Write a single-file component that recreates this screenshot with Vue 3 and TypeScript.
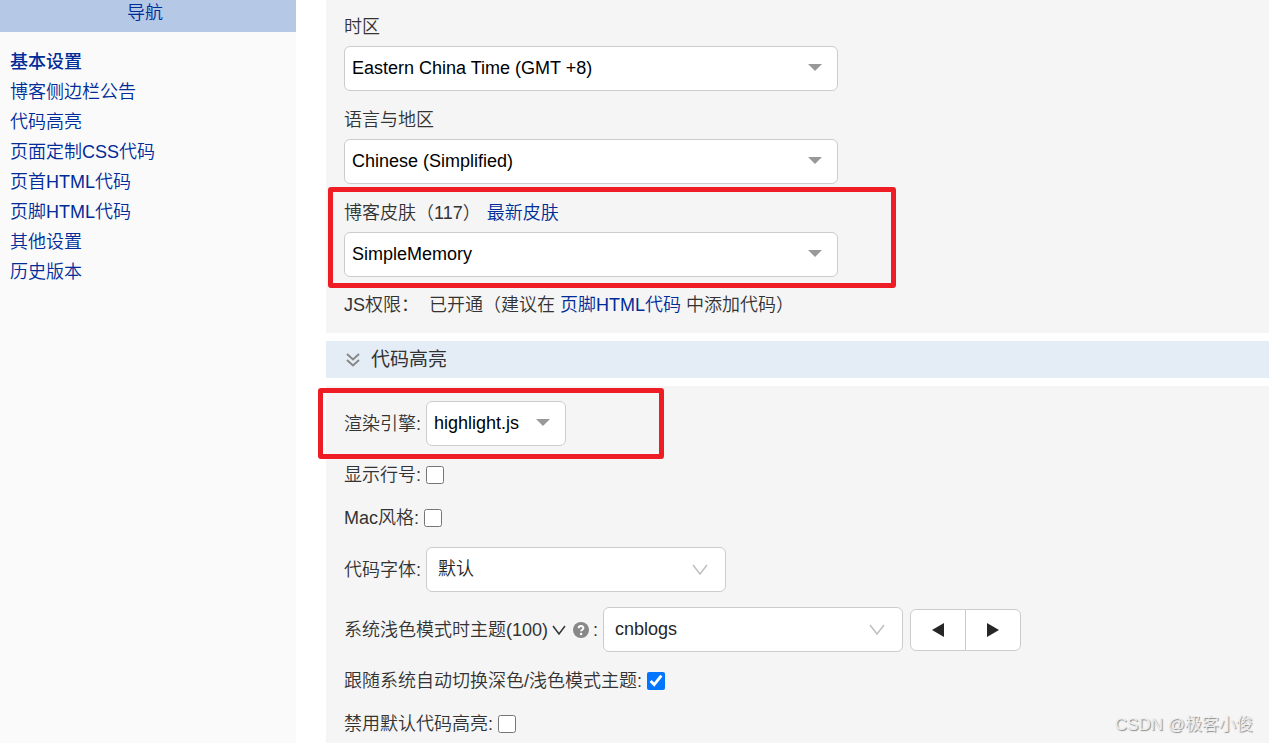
<script setup lang="ts">
import { ref } from 'vue'

const navItems = [
  { text: '基本设置', active: true },
  { text: '博客侧边栏公告', active: false },
  { text: '代码高亮', active: false },
  { text: '页面定制CSS代码', active: false },
  { text: '页首HTML代码', active: false },
  { text: '页脚HTML代码', active: false },
  { text: '其他设置', active: false },
  { text: '历史版本', active: false },
]

const timezone = ref('Eastern China Time (GMT +8)')
const language = ref('Chinese (Simplified)')
const skin = ref('SimpleMemory')
const engine = ref('highlight.js')
const codeFont = ref('默认')
const theme = ref('cnblogs')
const lineNumbers = ref(false)
const macStyle = ref(false)
const followSystem = ref(true)
const disableHighlight = ref(false)
</script>

<template>
  <div class="page">
    <aside class="sidebar">
      <h2 class="nav-title">导航</h2>
      <nav class="nav">
        <a v-for="item in navItems" :key="item.text" href="#" :class="{ active: item.active }">{{ item.text }}</a>
      </nav>
    </aside>

    <main class="main">
      <section class="panel basics">
        <div class="field">
          <label for="timezone">时区</label>
          <span class="select-wrap wide">
            <select id="timezone" v-model="timezone"><option>Eastern China Time (GMT +8)</option></select>
            <svg class="caret" viewBox="0 0 14 7"><path d="M0 0h14L7 7z" /></svg>
          </span>
        </div>
        <div class="field">
          <label for="language">语言与地区</label>
          <span class="select-wrap wide">
            <select id="language" v-model="language"><option>Chinese (Simplified)</option></select>
            <svg class="caret" viewBox="0 0 14 7"><path d="M0 0h14L7 7z" /></svg>
          </span>
        </div>
        <div class="field marked">
          <div class="label-line">
            <label for="skin">博客皮肤（117）</label>
            <a href="#">最新皮肤</a>
          </div>
          <span class="select-wrap wide">
            <select id="skin" v-model="skin"><option>SimpleMemory</option></select>
            <svg class="caret" viewBox="0 0 14 7"><path d="M0 0h14L7 7z" /></svg>
          </span>
          <span class="mark mark-skin"></span>
        </div>
        <p class="js-line">JS权限： &nbsp;已开通（建议在 <a href="#">页脚HTML代码</a> 中添加代码）</p>
      </section>

      <h3 class="section-title">
        <svg viewBox="0 0 16 16" width="16" height="16"><path d="M2 2l6 5.500 6-5.500M2 8l6 5.500 6-5.500" /></svg>
        代码高亮
      </h3>

      <section class="panel highlight">
        <div class="row marked">
          <label for="engine">渲染引擎:</label>
          <span class="select-wrap narrow">
            <select id="engine" v-model="engine"><option>highlight.js</option></select>
            <svg class="caret" viewBox="0 0 14 7"><path d="M0 0h14L7 7z" /></svg>
          </span>
          <span class="mark mark-engine"></span>
        </div>
        <div class="row">
          <label for="lines">显示行号:</label>
          <input id="lines" v-model="lineNumbers" type="checkbox" />
        </div>
        <div class="row">
          <label for="mac">Mac风格:</label>
          <input id="mac" v-model="macStyle" type="checkbox" />
        </div>
        <div class="row">
          <label for="font">代码字体:</label>
          <span class="select-wrap medium">
            <select id="font" v-model="codeFont"><option>默认</option></select>
            <svg class="chevron" viewBox="0 0 16 12"><path d="M1 1l7 9 7-9" /></svg>
          </span>
        </div>
        <div class="row">
          <label for="theme" class="theme-label">
            系统浅色模式时主题(100)
            <svg class="mini" viewBox="0 0 14 10"><path d="M1 1l6 8 6-8" /></svg>
            <svg class="help" viewBox="0 0 16 16">
              <circle cx="8" cy="8" r="8" />
              <path d="M5.700 6.200c0-3 4.700-3 4.700-.2 0 1.700-2.300 1.700-2.300 3.300" />
              <circle class="dot" cx="8.100" cy="12" r="1.200" />
            </svg>
            <span>:</span>
          </label>
          <span class="select-wrap medium">
            <select id="theme" v-model="theme"><option>cnblogs</option></select>
            <svg class="chevron" viewBox="0 0 16 12"><path d="M1 1l7 9 7-9" /></svg>
          </span>
          <span class="stepper">
            <button type="button" aria-label="上一个"><svg viewBox="0 0 12 14"><path d="M12 0v14L0 7z" /></svg></button>
            <button type="button" aria-label="下一个"><svg viewBox="0 0 12 14"><path d="M0 0v14l12-7z" /></svg></button>
          </span>
        </div>
        <div class="row">
          <label for="follow">跟随系统自动切换深色/浅色模式主题:</label>
          <input id="follow" v-model="followSystem" type="checkbox" />
        </div>
        <div class="row">
          <label for="disable">禁用默认代码高亮:</label>
          <input id="disable" v-model="disableHighlight" type="checkbox" />
        </div>
      </section>
    </main>
    <span class="watermark">CSDN @极客小俊</span>
  </div>
</template>

<style>
body {
  margin: 0;
  background: #fff;
}
</style>

<style scoped>
.page {
  position: relative;
  display: flex;
  gap: 30px;
  min-height: 100vh;
  color: #333;
  font: 350 18px/28px "Liberation Sans", "Noto Sans CJK SC", sans-serif;
}
a {
  color: #002c99;
  text-decoration: none;
}
.sidebar {
  flex: 0 0 296px;
  background: #fafafa;
}
.nav-title {
  margin: 0;
  padding-bottom: 6px;
  background: #b5c8e6;
  color: #002c99;
  font-size: 18px;
  font-weight: 350;
  line-height: 26px;
  text-align: center;
  text-indent: -6px;
}
.nav {
  display: flex;
  flex-direction: column;
  align-items: flex-start;
  padding: 15px 10px;
  line-height: 30px;
}
.nav .active {
  font-weight: 500;
}
.main {
  flex: 1;
  min-width: 0;
  display: flex;
  flex-direction: column;
  gap: 8px;
}
.panel {
  display: flex;
  flex-direction: column;
  background: #f5f5f5;
  gap: 15px;
  padding: 15px 18px;
}
.basics {
  padding-top: 13px;
}
.highlight {
  flex: 1;
  padding-bottom: 5px;
}
.field {
  display: flex;
  flex-direction: column;
  gap: 5px;
}
.label-line {
  display: flex;
  gap: 6px;
}
.marked {
  position: relative;
}
.mark {
  position: absolute;
  box-sizing: border-box;
  border: 5px solid #ee1c24;
  border-radius: 3px;
  pointer-events: none;
}
.mark-skin {
  top: -12px;
  bottom: -11px;
  left: -16px;
  width: 568px;
}
.mark-engine {
  top: -13px;
  bottom: -13px;
  left: -26px;
  width: 346px;
}
.js-line {
  margin: 0;
  line-height: 26px;
}
.select-wrap {
  position: relative;
  display: block;
}
.wide {
  max-width: 494px;
}
.narrow {
  width: 140px;
}
.medium {
  width: 300px;
}
select {
  display: block;
  box-sizing: border-box;
  width: 100%;
  height: 45px;
  margin: 0;
  padding: 0 36px 1px 7px;
  border: 1px solid #ccc;
  border-radius: 6px;
  background: #fff;
  color: #000;
  font: inherit;
  appearance: none;
}
.medium select {
  padding-left: 11px;
  color: #262626;
}
.caret {
  position: absolute;
  top: 18px;
  right: 16px;
  width: 14px;
  height: 7px;
  fill: #999;
  pointer-events: none;
}
.chevron {
  position: absolute;
  top: 17px;
  right: 18px;
  width: 16px;
  height: 12px;
  fill: none;
  stroke: #bfbfbf;
  stroke-width: 1.5;
  pointer-events: none;
}
.section-title {
  display: flex;
  align-items: center;
  gap: 10px;
  height: 37px;
  margin: 0;
  padding: 0 19px;
  background: #e4ecf5;
  font-size: 19px;
  font-weight: 400;
}
.section-title svg {
  fill: none;
  stroke: #888;
  stroke-width: 2;
}
.row {
  display: flex;
  align-items: center;
  gap: 5px;
  min-height: 28px;
}
input {
  width: 18px;
  height: 18px;
  margin: 0;
}
.theme-label {
  display: flex;
  align-items: center;
  gap: 4px;
}
.mini {
  width: 14px;
  height: 10px;
  fill: none;
  stroke: #333;
  stroke-width: 1.5;
}
.help {
  width: 16px;
  height: 16px;
  margin-left: 3px;
  fill: #888;
}
.help path {
  fill: none;
  stroke: #fff;
  stroke-width: 2;
}
.help .dot {
  fill: #fff;
}
.stepper {
  display: flex;
  margin-left: 2px;
}
button {
  display: flex;
  align-items: center;
  justify-content: center;
  box-sizing: border-box;
  width: 56px;
  height: 42px;
  padding: 0;
  border: 1px solid #ccc;
  background: #fff;
}
button:first-child {
  border-radius: 6px 0 0 6px;
}
button:last-child {
  margin-left: -1px;
  border-radius: 0 6px 6px 0;
}
button svg {
  width: 12px;
  height: 14px;
  fill: #262626;
}
.watermark {
  position: absolute;
  right: 16px;
  bottom: 4px;
  color: #eee;
  font-size: 17px;
  text-shadow: 1px 1px 1px #888;
}
</style>
